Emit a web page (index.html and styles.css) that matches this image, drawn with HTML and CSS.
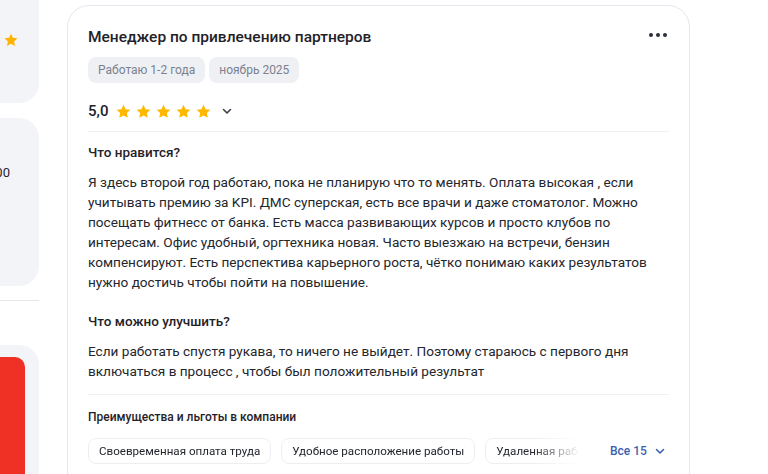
FILE: index.html
```html
<!DOCTYPE html>
<html lang="ru">
<head>
<meta charset="utf-8">
<link rel="stylesheet" href="styles.css">
</head>
<body>
<div class="page">
  <aside class="side">
    <div class="side-inner">
      <div class="scard scard-1">
        <div class="srating">4,4 <svg class="sstar" viewBox="0 0 24 24"><path d="M12 2.5l2.9 6.2 6.8.8-5 4.7 1.3 6.7L12 17.6l-6 3.3 1.3-6.7-5-4.7 6.8-.8z"/></svg></div>
      </div>
      <div class="scard scard-2">
        <div class="ssalary">от 120 000</div>
      </div>
      <div class="sdivider"></div>
      <div class="scard scard-3">
        <div class="sred"></div>
      </div>
    </div>
  </aside>

  <main class="card">
    <div class="head">
      <h1 class="title">Менеджер по привлечению партнеров</h1>
      <div class="more"><span></span><span></span><span></span></div>
    </div>
    <div class="tags">
      <span class="tag">Работаю 1-2 года</span>
      <span class="tag">ноябрь 2025</span>
    </div>
    <div class="rating">
      <span class="score">5,0</span>
      <span class="stars">
        <svg viewBox="0 0 24 24"><path d="M12 2.5l2.9 6.2 6.8.8-5 4.7 1.3 6.7L12 17.6l-6 3.3 1.3-6.7-5-4.7 6.8-.8z"/></svg>
        <svg viewBox="0 0 24 24"><path d="M12 2.5l2.9 6.2 6.8.8-5 4.7 1.3 6.7L12 17.6l-6 3.3 1.3-6.7-5-4.7 6.8-.8z"/></svg>
        <svg viewBox="0 0 24 24"><path d="M12 2.5l2.9 6.2 6.8.8-5 4.7 1.3 6.7L12 17.6l-6 3.3 1.3-6.7-5-4.7 6.8-.8z"/></svg>
        <svg viewBox="0 0 24 24"><path d="M12 2.5l2.9 6.2 6.8.8-5 4.7 1.3 6.7L12 17.6l-6 3.3 1.3-6.7-5-4.7 6.8-.8z"/></svg>
        <svg viewBox="0 0 24 24"><path d="M12 2.5l2.9 6.2 6.8.8-5 4.7 1.3 6.7L12 17.6l-6 3.3 1.3-6.7-5-4.7 6.8-.8z"/></svg>
      </span>
      <svg class="chev" viewBox="0 0 12 12"><path d="M2.5 4.5L6 8l3.5-3.5"/></svg>
    </div>
    <div class="divider"></div>

    <h2 class="sub">Что нравится?</h2>
    <p class="text">Я здесь второй год работаю, пока не планирую что то менять. Оплата высокая , если<br>учитывать премию за KPI. ДМС суперская, есть все врачи и даже стоматолог. Можно<br>посещать фитнесс от банка. Есть масса развивающих курсов и просто клубов по<br>интересам. Офис удобный, оргтехника новая. Часто выезжаю на встречи, бензин<br>компенсируют. Есть перспектива карьерного роста, чётко понимаю каких результатов<br>нужно достичь чтобы пойти на повышение.</p>

    <h2 class="sub sub-2">Что можно улучшить?</h2>
    <p class="text">Если работать спустя рукава, то ничего не выйдет. Поэтому стараюсь с первого дня<br>включаться в процесс , чтобы был положительный результат</p>

    <div class="divider divider-2"></div>

    <h3 class="perks-title">Преимущества и льготы в компании</h3>
    <div class="perks">
      <div class="perk-list">
        <span class="perk">Своевременная оплата труда</span>
        <span class="perk">Удобное расположение работы</span>
        <span class="perk">Удаленная работа</span>
      </div>
      <a class="all">Все 15 <svg class="chev chev-blue" viewBox="0 0 12 12"><path d="M2.5 4.5L6 8l3.5-3.5"/></svg></a>
    </div>
  </main>
</div>
</body>
</html>
```

FILE: styles.css
```css
* { box-sizing: border-box; }
html, body { margin: 0; padding: 0; background: #fff; }
body {
  font-family: Roboto, "Noto Sans", Arial, sans-serif;
  color: #1f2229;
  overflow: hidden;
  height: 474px;
}
.page {
  display: flex;
  gap: 28px;
  align-items: flex-start;
}

/* left column */
.side {
  width: 39px;
  flex: 0 0 39px;
  overflow: hidden;
  margin-top: -40px;
  height: 560px;
}
.side-inner {
  width: 300px;
  margin-left: -261px;
  display: flex;
  flex-direction: column;
}
.scard {
  background: #f3f4f8;
  border-radius: 20px;
}
.scard-1 {
  height: 143px;
  padding: 71px 20px 0 0;
  display: flex;
  justify-content: flex-end;
}
.srating {
  display: flex;
  align-items: center;
  gap: 8px;
  font-size: 13px;
  height: 18px;
  color: #1f2229;
}
.sstar { width: 16px; height: 16px; fill: #ffb300; }
.scard-2 {
  margin-top: 15px;
  height: 168px;
  padding-top: 46px;
  display: flex;
  justify-content: flex-end;
}
.ssalary {
  font-size: 13px;
  margin-right: 29px;
  line-height: 18px;
}
.sdivider {
  margin-top: 14px;
  height: 1px;
  background: #e4e6eb;
}
.scard-3 {
  margin-top: 44px;
  height: 200px;
  padding: 12px 14px 0 0;
  display: flex;
  justify-content: flex-end;
}
.sred {
  width: 200px;
  height: 200px;
  background: #ee3124;
  border-radius: 10px;
}

/* main card */
.card {
  margin-top: 5px;
  width: 623px;
  flex: 0 0 623px;
  border: 1px solid #e4e7ed;
  border-radius: 22px;
  padding: 19px 20px 20px 20px;
  min-height: 520px;
}
.head {
  display: flex;
  justify-content: space-between;
  align-items: flex-start;
  height: 24px;
}
.title {
  margin: 0;
  font-size: 15.5px;
  font-weight: 500;
  line-height: 24px;
  color: #1f2229;
}
.more {
  display: flex;
  gap: 3px;
  margin: 8px 2px 0 0;
}
.more span {
  width: 4px;
  height: 4px;
  border-radius: 50%;
  background: #2b2f38;
}
.tags {
  display: flex;
  gap: 4px;
  margin-top: 8px;
}
.tag {
  background: #eef0f4;
  border-radius: 8px;
  color: #7b818d;
  font-size: 12px;
  line-height: 26px;
  height: 26px;
  padding: 0 10px;
}
.rating {
  display: flex;
  align-items: center;
  margin-top: 16px;
  height: 24px;
}
.score {
  font-size: 15px;
  font-weight: 500;
  color: #1f2229;
  margin-right: 7px;
}
.stars { display: flex; gap: 3px; }
.stars svg { width: 17px; height: 17px; fill: #ffb800; }
.chev {
  width: 12px;
  height: 12px;
  fill: none;
  stroke: #3b3f47;
  stroke-width: 1.6;
  stroke-linecap: round;
  stroke-linejoin: round;
  margin-left: 9px;
}
.divider {
  height: 1px;
  background: #eef0f3;
  margin-top: 8px;
}
.sub {
  margin: 10px 0 0;
  font-size: 13.5px;
  font-weight: 500;
  line-height: 20px;
  color: #1f2229;
}
.sub-2 { margin-top: 19px; }
.text {
  margin: 10px 0 0;
  font-size: 13.6px;
  line-height: 20px;
  color: #23262d;
}
.divider-2 { margin-top: 13px; }
.perks-title {
  margin: 13px 0 0;
  font-size: 12px;
  font-weight: 500;
  line-height: 18px;
  color: #1f2229;
}
.perks {
  display: flex;
  align-items: center;
  margin-top: 12px;
}
.perk-list {
  display: flex;
  gap: 10px;
  width: 492px;
  overflow: hidden;
  flex: 0 0 492px;
  -webkit-mask-image: linear-gradient(to right, #000 445px, transparent 492px);
  mask-image: linear-gradient(to right, #000 445px, transparent 492px);
}
.perk {
  flex: 0 0 auto;
  border: 1px solid #eceef2;
  border-radius: 8px;
  font-size: 11.6px;
  line-height: 24px;
  padding: 0 10px;
  color: #23262d;
  white-space: nowrap;
}
.all {
  margin-left: 30px;
  display: flex;
  align-items: center;
  color: #3b62b0;
  font-size: 12px;
  font-weight: 500;
  white-space: nowrap;
}
.chev-blue { stroke: #3b62b0; margin-left: 7px; }
```
